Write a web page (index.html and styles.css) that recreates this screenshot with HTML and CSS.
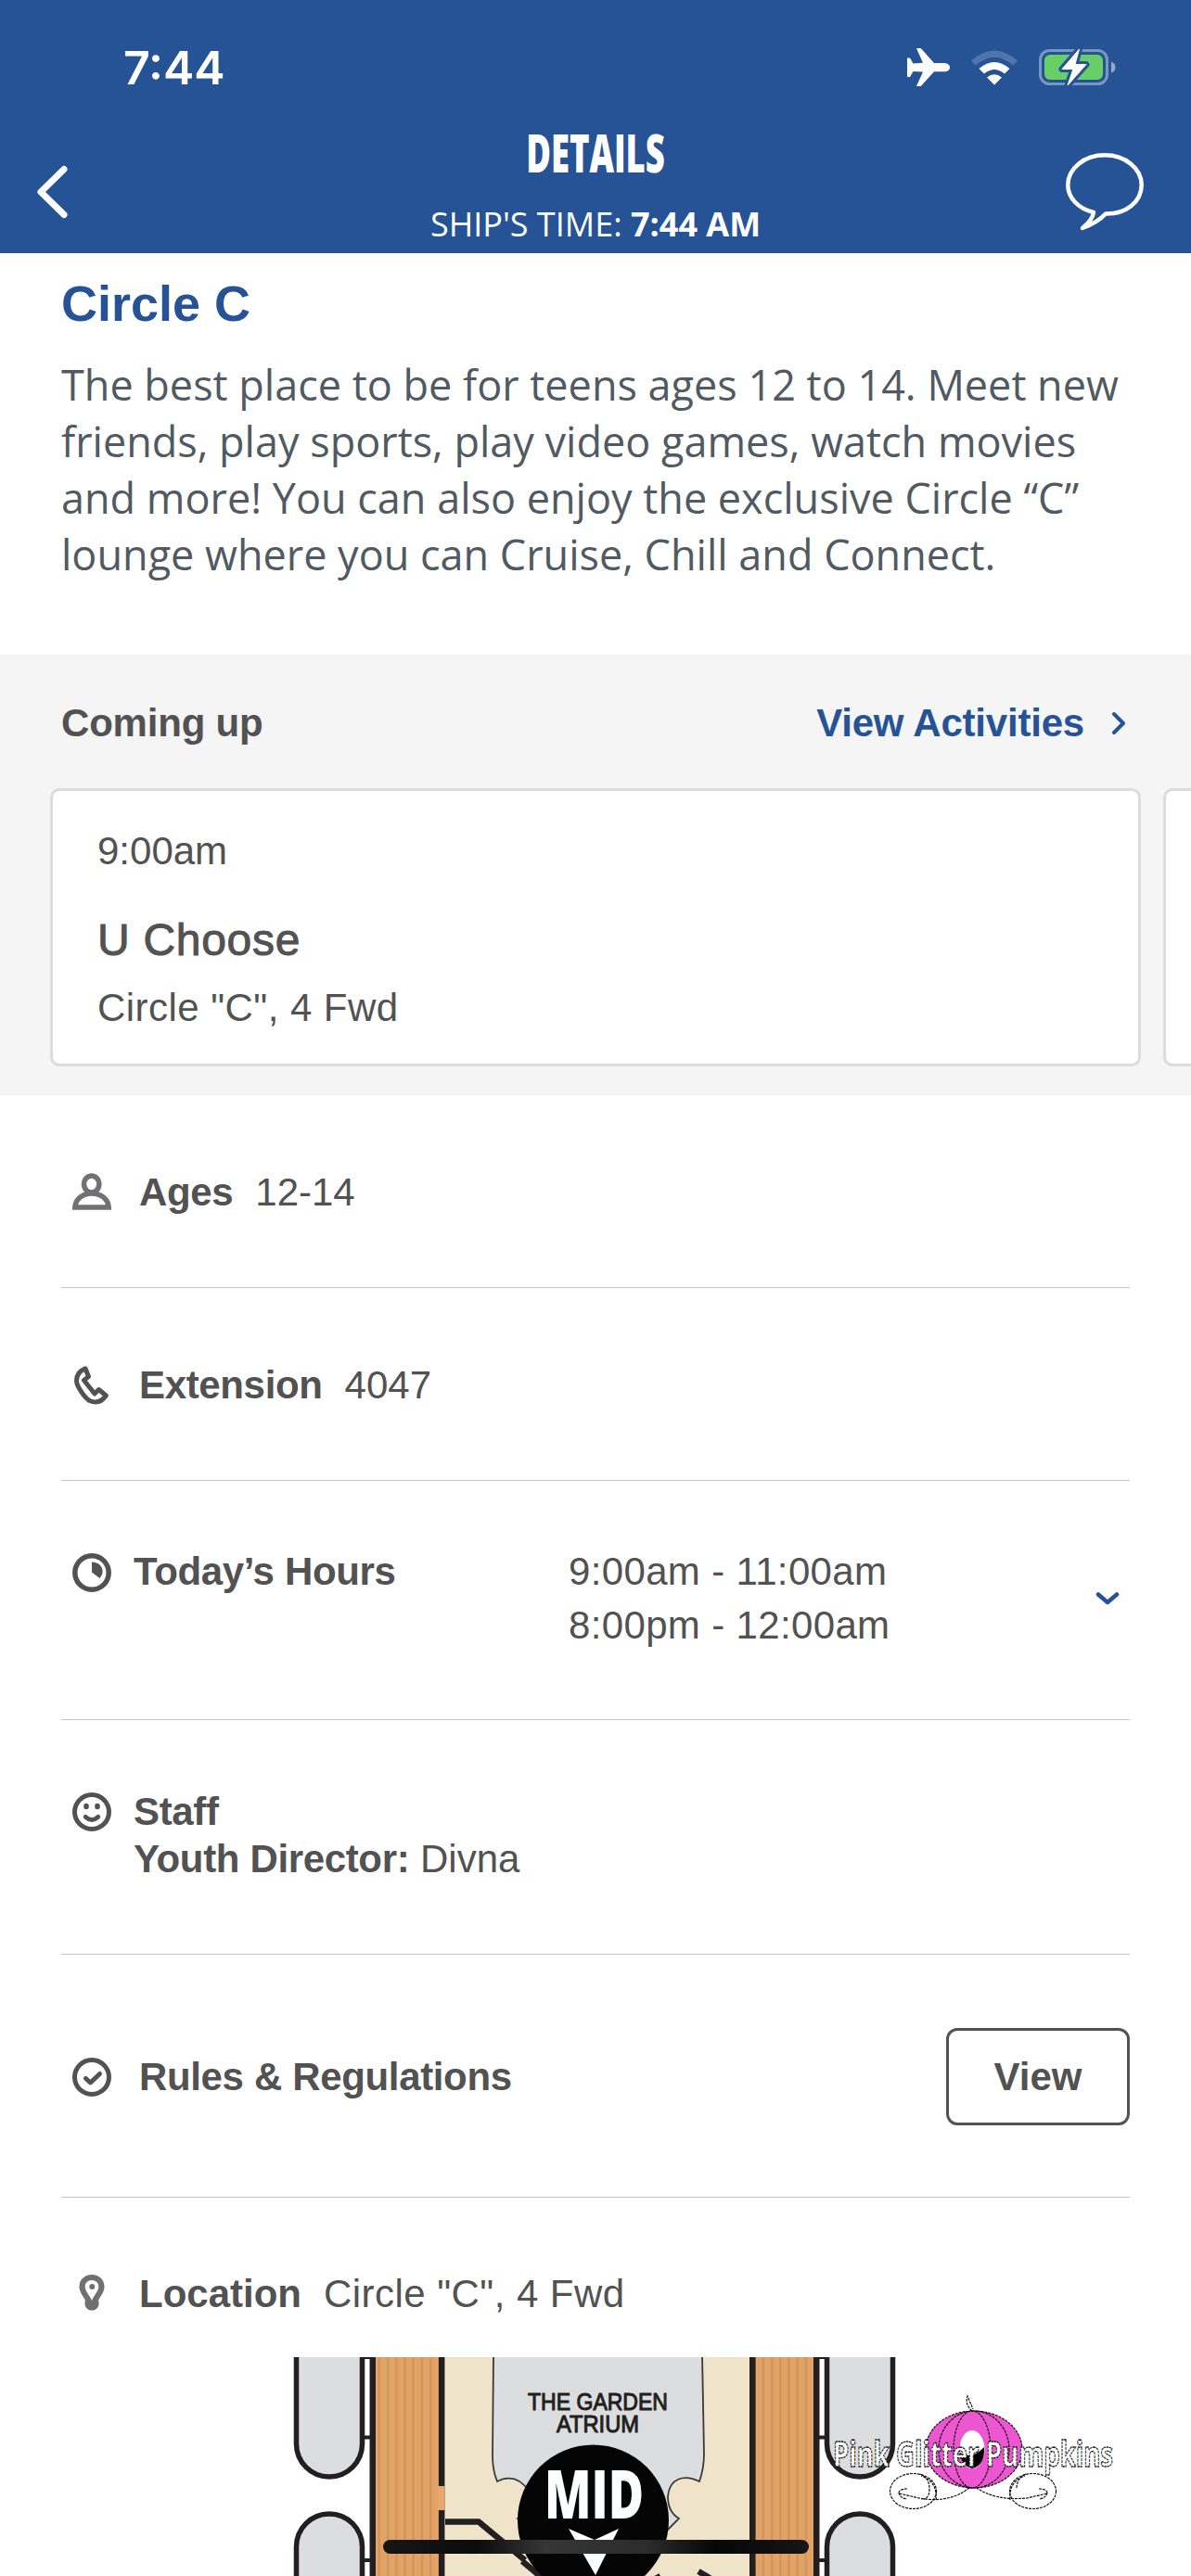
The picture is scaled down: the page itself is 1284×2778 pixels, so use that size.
FILE: index.html
```html
<!DOCTYPE html>
<html lang="en">
<head>
    <meta charset="UTF-8">
    <meta name="viewport" content="width=device-width, initial-scale=1.0">
    <title>Details</title>
    <link rel="stylesheet" href="styles.css">
</head>
<body>

    <header class="header">
        <div class="status-bar">
            <span class="clock">7:44</span>
            <div class="status-icons">
                <svg width="46" height="42" viewBox="0 0 46 42" fill="#fff">
                    <path d="M10 0h4.500q1.500 1 2.500 2.500L29 16h12q5 1 5 4.700t-5 4.600H29L17 38.500q-1.500 2-2.500 2.500H10l7-15.500L6.500 25l-3.500 6H0V10.500h3L6.500 16.500l10.500-.7z"/>
                </svg>
                <svg width="52" height="38" viewBox="0 0 52 38" fill="#fff">
                    <path d="M1 11.500Q26-10.500 51 11.500L46 16.500Q26-1 6 16.500z" opacity=".2"/>
                    <path d="M9.500 20Q26 6 42.500 20L37 25.500Q26 16.500 15 25.500z"/>
                    <path d="M18 29.500q8-6.500 16 0L26 37.500z"/>
                </svg>
                <svg width="83" height="42" viewBox="0 0 83 42">
                    <rect x="1.500" y="2.500" width="72" height="36" rx="10" fill="none" stroke="#fff" stroke-opacity=".4" stroke-width="3"/>
                    <rect x="6" y="7" width="63" height="27" rx="6" fill="#68ce67"/>
                    <path d="M78 14.500q4.500 1.500 4.500 6t-4.500 6z" fill="#fff" opacity=".5"/>
                    <path d="M43.500 1L25 22.500h12L31 40l20-22.500H39z" fill="#fff" stroke="#265395" stroke-width="7" stroke-linejoin="round"/>
                    <path d="M43.500 1L25 22.500h12L31 40l20-22.500H39z" fill="#fff" stroke="#fff" stroke-linejoin="round"/>
                </svg>
            </div>
        </div>
        <nav class="nav">
            <svg class="back" width="36" height="60" viewBox="0 0 36 60" fill="none" stroke="#fff" stroke-width="7" stroke-linecap="round" stroke-linejoin="round">
                <path d="M31 5.500L6 30l25 24.500"/>
            </svg>
            <div class="nav-title">
                <h1>DETAILS</h1>
                <p class="ship-time">SHIP'S TIME: <b>7:44 AM</b></p>
            </div>
            <svg class="chat" width="84" height="84" viewBox="0 0 84 84" fill="none" stroke="#fff" stroke-width="4.500" stroke-linejoin="round">
                <path d="M42 2.300C64 2.300 81.700 16.500 81.700 34.500S65 66 43 65.500C36 73 29 77 18 81Q29 72 30 64C13 60 2.300 48 2.300 34.500 2.300 16.500 20 2.300 42 2.300z"/>
            </svg>
        </nav>
    </header>

    <main>
        <section class="intro">
            <h2>Circle C</h2>
            <p>The best place to be for teens ages 12 to 14. Meet new<br>
            friends, play sports, play video games, watch movies<br>
            and more! You can also enjoy the exclusive Circle “C”<br>
            lounge where you can Cruise, Chill and Connect.</p>
        </section>

        <section class="upcoming">
            <div class="upcoming-head">
                <span>Coming up</span>
                <a class="view-all">View Activities
                    <svg width="16" height="26" viewBox="0 0 16 26" fill="none" stroke="#265395" stroke-width="4" stroke-linecap="round" stroke-linejoin="round">
                        <path d="M3 3l10 10L3 23"/>
                    </svg>
                </a>
            </div>
            <div class="cards">
                <article class="card">
                    <p class="card-time">9:00am</p>
                    <h3>U Choose</h3>
                    <p class="card-place">Circle "C", 4 Fwd</p>
                </article>
                <article class="card"></article>
            </div>
        </section>

        <section class="info">
            <div class="row">
                <svg class="icon" viewBox="0 0 42 42" fill="none" stroke="#717173" stroke-width="5.500">
                    <ellipse cx="20.700" cy="12" rx="8.200" ry="9"/>
                    <path d="M2.800 37C3.500 28 11 22 21 22s17.500 6 18.200 15z"/>
                </svg>
                <b>Ages</b>
                <span class="value">12-14</span>
            </div>

            <div class="row">
                <svg class="icon" viewBox="0 0 42 42" fill="none" stroke="#525252" stroke-width="5" stroke-linejoin="round">
                    <path d="M14 2.800C8 5 4.500 10 4.500 16c0 6 9 18.500 14 21.500 7 3 13 1.500 17.800-5.500l-7.800-6.500-4.500 4.500L12.500 15.500l5-4z"/>
                </svg>
                <b>Extension</b>
                <span class="value">4047</span>
            </div>

            <div class="row row-hours">
                <svg class="icon" viewBox="0 0 42 42" fill="none" stroke="#525252" stroke-width="5.500">
                    <circle cx="21" cy="21" r="18.200"/>
                    <path d="M21 9.500q8 0 11 6.500 2 6-2.500 11L21 20.500z" fill="#525252" stroke="none"/>
                </svg>
                <b class="hours-label">Today’s Hours</b>
                <span class="hours">9:00am - 11:00am<br>8:00pm - 12:00am</span>
                <svg class="expand" width="26" height="16" viewBox="0 0 26 16" fill="none" stroke="#265395" stroke-width="4.500" stroke-linecap="round" stroke-linejoin="round">
                    <path d="M3 3.500l10 8.500 10-8.500"/>
                </svg>
            </div>

            <div class="row row-staff">
                <svg class="icon" viewBox="0 0 42 42" fill="none" stroke="#525252" stroke-width="5">
                    <circle cx="21" cy="21" r="18.500"/>
                    <ellipse cx="15" cy="15" rx="2.800" ry="3.200" fill="#525252" stroke="none"/>
                    <ellipse cx="27" cy="15" rx="2.800" ry="3.200" fill="#525252" stroke="none"/>
                    <path d="M14.300 26.500q6.700 6 13.400 0" stroke-linecap="round"/>
                </svg>
                <p><b>Staff</b><br><b>Youth Director:</b> Divna</p>
            </div>

            <div class="row row-rules">
                <svg class="icon" viewBox="0 0 42 42" fill="none" stroke="#525252" stroke-width="5">
                    <circle cx="21" cy="21" r="18.500"/>
                    <path d="M14.500 22.500l5 4.500 10-9.500" stroke-linecap="round" stroke-linejoin="round"/>
                </svg>
                <b>Rules &amp; Regulations</b>
                <button class="view-btn">View</button>
            </div>

            <div class="row row-location">
                <svg class="icon" viewBox="0 0 42 42" fill="#717173">
                    <path fill-rule="evenodd" d="M21 0c8 0 13.500 5.500 13.500 13 0 6-4 9.500-6.500 15a7.600 7.600 0 1 1-14 0C11.500 22.500 7.500 19 7.500 13 7.500 5.500 13 0 21 0zM21 6c-4.500 0-7.300 3-7.300 7 0 5 4.300 8 7.300 15 3-7 7.300-10 7.300-15 0-4-2.800-7-7.300-7z"/>
                    <circle cx="21.300" cy="13" r="3"/>
                </svg>
                <b>Location</b>
                <span class="value place">Circle "C", 4 Fwd</span>
            </div>
        </section>

        <!-- deck plan -->
        <svg class="deck-map" width="652" height="236" viewBox="315 2542 652 236">
            <defs>
                <pattern id="wood" width="9.200" height="20" patternUnits="userSpaceOnUse">
                    <rect width="9.200" height="20" fill="#e3a266"/>
                    <rect x="3" width="2.200" height="20" fill="#cd945c"/>
                </pattern>
            </defs>
            <rect x="480" y="2542" width="330" height="236" fill="#efe3c9"/>
            <rect x="405" y="2542" width="70" height="236" fill="url(#wood)"/>
            <rect x="814" y="2542" width="64" height="236" fill="url(#wood)"/>
            <g fill="#231f20">
                <rect x="398.500" y="2542" width="6.500" height="236"/>
                <rect x="473" y="2542" width="6.500" height="236"/>
                <rect x="808" y="2542" width="6.500" height="236"/>
                <rect x="877" y="2542" width="6.500" height="236"/>
            </g>
            <rect x="472" y="2681" width="7.500" height="26" fill="#e9a76c"/>
            <g fill="#dcddde" stroke="#231f20" stroke-width="5.500">
                <rect x="319.500" y="2450" width="71" height="221" rx="35.500"/>
                <rect x="319.500" y="2711" width="71" height="160" rx="35.500"/>
                <rect x="891.500" y="2450" width="71" height="221" rx="35.500"/>
                <rect x="891.500" y="2711" width="71" height="160" rx="35.500"/>
            </g>
            <path d="M391 2628.500h9M391 2761h9M883 2628.500h8M883 2761h8M391 2542h9M883 2542h8" stroke="#231f20" stroke-width="4"/>
            <path d="M480 2719.500h36L566 2761M563 2762l30 25M680 2796l32-18M753 2773l15 9" fill="none" stroke="#231f20" stroke-width="6.500"/>
            <path d="M532 2540l-1 108q0 16 5 28 20-10 34 10 8 22-12 30l14 12h148l12-12q-12-7-12-24c2-20 18-24 34-16q5-14 5-30l-2-107z" fill="#dcddde" stroke="#3d393a" stroke-width="1.800"/>
            <circle cx="639.500" cy="2718" r="81.500" fill="#050505"/>
            <g class="map-label" fill="#231f20">
                <text x="569" y="2599" textLength="151" lengthAdjust="spacingAndGlyphs">THE GARDEN</text>
                <text x="600" y="2622.500" textLength="89" lengthAdjust="spacingAndGlyphs">ATRIUM</text>
            </g>
            <text class="map-mid" x="587" y="2716" textLength="107" lengthAdjust="spacingAndGlyphs" fill="#fbfdff">MID</text>
            <path d="M613 2727l28 12 26-12-25 50z" fill="#fbfdff"/>
        </svg>
    </main>

    <svg class="watermark" width="310" height="128" viewBox="895 2580 310 128">
        <ellipse cx="1050" cy="2641.500" rx="52" ry="41.500" fill="#ec56d0"/>
        <g fill="none" stroke="#111" stroke-width="1.200" stroke-dasharray="3 1">
            <ellipse cx="1050" cy="2641.500" rx="52" ry="41.500"/>
            <ellipse cx="1050" cy="2641.500" rx="38" ry="41.500"/>
            <ellipse cx="1048" cy="2641.500" rx="20" ry="41.500"/>
            <path d="M1048 2600q-8-7-5-16l6 14"/>
            <ellipse cx="984.500" cy="2686.500" rx="25" ry="19"/>
            <ellipse cx="1113.500" cy="2686.500" rx="25" ry="19"/>
            <path d="M992 2668q10 4 10 16t-9 11M1009 2696q2-20-16-26M978 2684q-9 0-9 5l22 5q32 6 54-11M969 2688q1 6 9 7"/>
            <path d="M1106 2668q-10 4-10 16M1089 2696q-2-20 16-26M1120 2684q9 0 9 5l-22 5q-34 3-54-11M1129 2688q-1 6-9 7"/>
        </g>
        <ellipse cx="1048" cy="2641.500" rx="13.500" ry="20.500" fill="#fff"/>
        <path d="M1035 2645q13 8 26-6 1 20-13 23-12-3-13-17z"/>
        <text x="898" y="2660" textLength="302" lengthAdjust="spacingAndGlyphs">Pink Glitter Pumpkins</text>
    </svg>

    <div class="home-indicator"></div>

</body>
</html>
```
FILE: styles.css
```css
* {
    box-sizing: border-box;
}
body {
    position: relative;
    width: 1284px;
    height: 2778px;
    margin: 0;
    overflow: hidden;
    background: #fff;
    color: #525252;
    font-family: "Liberation Sans", Arial, sans-serif;
    font-size: 42px;
}
h1, h2, h3, p {
    margin: 0;
}
svg {
    display: block;
    flex-shrink: 0;
}

/* header */
.header {
    height: 273px;
    background: #265395;
    color: #fff;
}
.status-bar {
    display: flex;
    justify-content: space-between;
    align-items: center;
    height: 134px;
    padding: 12px 81px 0 133px;
}
.clock {
    font-family: Inter, sans-serif;
    font-size: 50px;
    font-weight: 600;
}
.status-icons {
    display: flex;
    align-items: center;
    gap: 22px;
}
.nav {
    display: grid;
    grid-template-columns: 200px 1fr 200px;
    height: 139px;
}
.back {
    margin: 43px 0 0 38px;
}
.chat {
    justify-self: end;
    margin: 31px 51px 0 0;
}
.nav-title {
    text-align: center;
    font-family: "Open Sans", sans-serif;
}
.nav-title h1 {
    font-size: 56px;
    font-weight: 800;
    line-height: 60px;
    transform: scaleX(0.65);
}
.ship-time {
    margin-top: 23px;
    font-size: 36px;
    line-height: 50px;
}

/* description */
.intro {
    height: 433px;
    padding: 24px 66px 0;
}
.intro h2 {
    color: #265395;
    font-size: 54px;
    line-height: 60px;
}
.intro p {
    margin-top: 27px;
    color: #515a62;
    font-family: "Open Sans", sans-serif;
    font-size: 45px;
    line-height: 61px;
    white-space: nowrap;
}

/* coming up */
.upcoming {
    height: 475px;
    padding-top: 49px;
    background: #f5f5f5;
    overflow: hidden;
}
.upcoming-head {
    display: flex;
    justify-content: space-between;
    padding: 0 70px 0 66px;
    font-weight: bold;
    letter-spacing: -0.2px;
    line-height: 50px;
}
.view-all {
    display: flex;
    align-items: center;
    gap: 29px;
    color: #265395;
}
.cards {
    display: flex;
    gap: 24px;
    margin-top: 45px;
    padding-left: 54px;
}
.card {
    flex: 0 0 1176px;
    height: 300px;
    padding: 40px 48px;
    border: 3px solid #dcdcdc;
    border-radius: 10px;
    background: #fff;
}
.card p {
    line-height: 50px;
}
.card h3 {
    margin: 41px 0 18px;
    font-size: 48px;
    font-weight: normal;
    letter-spacing: 0.7px;
    line-height: 60px;
    -webkit-text-stroke: 1px #525252;
}
.card-place, .place {
    letter-spacing: 0.45px;
}

/* info rows */
.info {
    padding: 0 66px;
}
.row {
    display: flex;
    padding: 80px 0 77px 12px;
    border-bottom: 1px solid #c4c4c4;
    line-height: 50px;
}
.row b {
    letter-spacing: -0.35px;
}
.icon {
    width: 42px;
    height: 42px;
    margin: 4px 30px 0 0;
}
.value {
    margin-left: 24px;
}
.row-hours {
    padding-top: 69px;
    padding-bottom: 72px;
    line-height: 58px;
}
.row-hours .icon {
    margin: 9px 24px 0 0;
}
.hours-label {
    width: 469px;
}
.hours {
    letter-spacing: 0.35px;
}
.expand {
    align-self: center;
    margin: 0 11px 0 auto;
}
.row-staff {
    padding-top: 73px;
    line-height: 51px;
}
.row-staff .icon {
    margin: 5px 24px 0 0;
}
.row-rules {
    align-items: center;
    padding-top: 79px;
}
.row-rules .icon {
    margin-top: 0;
}
.view-btn {
    width: 198px;
    height: 105px;
    margin-left: auto;
    padding: 0;
    border: 3px solid #525252;
    border-radius: 12px;
    background: #fff;
    color: #525252;
    font: bold 42px "Liberation Sans", Arial, sans-serif;
}
.row-location {
    padding-top: 79px;
    padding-bottom: 43px;
    border-bottom: none;
}
.row-location b {
    letter-spacing: 0;
}

/* map */
.deck-map {
    margin-left: 315px;
}
.map-label {
    font-size: 25px;
    stroke: #231f20;
    stroke-width: 1px;
}
.map-mid {
    font-family: "Open Sans", sans-serif;
    font-size: 73px;
    font-weight: 800;
}
.watermark {
    position: absolute;
    left: 895px;
    top: 2580px;
    overflow: visible;
}
.watermark text {
    font-family: "Open Sans", sans-serif;
    font-size: 38px;
    font-weight: 700;
    fill: #fff;
    stroke: #111;
    stroke-width: 1.3px;
    stroke-dasharray: 3 1;
}
.home-indicator {
    position: absolute;
    left: 413px;
    bottom: 24px;
    width: 459px;
    height: 15px;
    border-radius: 8px;
    background: linear-gradient(90deg, #161616, #0b0b0b 22%, #363636 38%, #2c2c2c 62%, #060606 78%, #161616);
}
```
